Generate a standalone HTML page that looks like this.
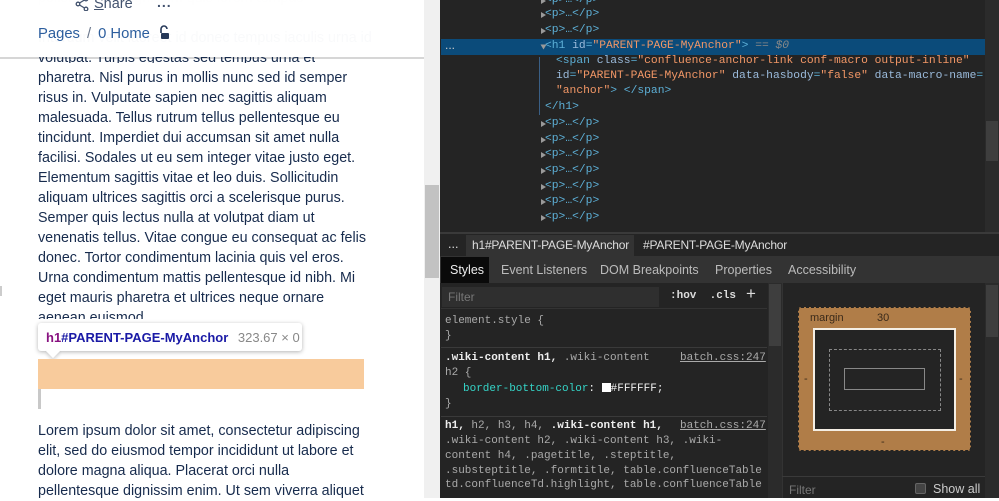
<!DOCTYPE html>
<html><head><meta charset="utf-8"><style>
*{margin:0;padding:0;box-sizing:border-box}
body{width:999px;height:498px;overflow:hidden;position:relative;background:#fff;font-family:"Liberation Sans",sans-serif}
.a{position:absolute;white-space:nowrap}
.lt{left:38px;font-size:14.3px;color:#172b4d;line-height:20px}
.m{font-family:"Liberation Mono",monospace;font-size:11px}
.d{font-family:"Liberation Mono",monospace;font-size:11.3px}
.dom{left:545px;color:#5db0d7}
.tri{position:absolute;left:-4px;top:4px;width:0;height:0;border-left:5px solid #9a9a9a;border-top:3.5px solid transparent;border-bottom:3.5px solid transparent}
.at{color:#9bbbdc}.av{color:#f29766}.tg{color:#5db0d7}
.sel{color:#aaa}
</style></head><body>
<div class="a lt" style="top:-12px;color:#c9ced6">pellentesque dignissim quis lorem tempus</div>
<div class="a lt" style="top:9px;color:#e4e7ec">elementum nibh quis eleifend quam adipiscing vitae</div>
<div class="a" style="left:0;top:0;width:424px;height:58px;background:rgba(255,255,255,.9)"></div>
<div class="a lt" style="top:28px;color:#eceef2">Interdum velit laoreet id donec tempus iaculis urna id</div>
<div class="a" style="left:0;top:0;width:424px;height:58px;background:rgba(255,255,255,.7)"></div>
<svg class="a" style="left:75px;top:-3px" width="14" height="14" viewBox="0 0 14 14"><circle cx="11" cy="2" r="1.8" fill="none" stroke="#42526e" stroke-width="1.3"/><circle cx="3" cy="7" r="1.8" fill="none" stroke="#42526e" stroke-width="1.3"/><circle cx="11" cy="12" r="1.8" fill="none" stroke="#42526e" stroke-width="1.3"/><path d="M4.5 6 9.5 3M4.5 8 9.5 11" stroke="#42526e" stroke-width="1.3"/></svg>
<div class="a" style="left:94px;top:-4px;font-size:14.5px;color:#42526e"><u>S</u>hare</div>
<div class="a" style="left:157px;top:-6px;font-size:14px;color:#42526e;font-weight:bold;letter-spacing:1px">...</div>
<div class="a" style="left:38px;top:26px;font-size:14.8px"><span style="color:#2c5e9e">Pages</span><span style="color:#6b778c;margin:0 7px">/</span><span style="color:#2c5e9e">0 Home</span></div>
<svg class="a" style="left:158px;top:25px" width="12" height="15" viewBox="0 0 12 15"><path d="M3 8V4a3 3 0 0 1 6 0" fill="none" stroke="#253858" stroke-width="1.6"/><rect x="3" y="8" width="8" height="6" rx="1" fill="#253858"/></svg>
<div class="a" style="left:0;top:57px;width:424px;height:2px;background:#d6d6d6"></div>
<div class="a lt" style="top:57px;height:6px;overflow:hidden;line-height:2px;color:#172b4d">volutpat. Turpis egestas sed tempus urna et</div>
<div class="a lt" style="top:68px">pharetra. Nisl purus in mollis nunc sed id semper</div>
<div class="a lt" style="top:88px">risus in. Vulputate sapien nec sagittis aliquam</div>
<div class="a lt" style="top:108px">malesuada. Tellus rutrum tellus pellentesque eu</div>
<div class="a lt" style="top:128px">tincidunt. Imperdiet dui accumsan sit amet nulla</div>
<div class="a lt" style="top:148px">facilisi. Sodales ut eu sem integer vitae justo eget.</div>
<div class="a lt" style="top:168px">Elementum sagittis vitae et leo duis. Sollicitudin</div>
<div class="a lt" style="top:188px">aliquam ultrices sagittis orci a scelerisque purus.</div>
<div class="a lt" style="top:208px">Semper quis lectus nulla at volutpat diam ut</div>
<div class="a lt" style="top:228px">venenatis tellus. Vitae congue eu consequat ac felis</div>
<div class="a lt" style="top:248px">donec. Tortor condimentum lacinia quis vel eros.</div>
<div class="a lt" style="top:268px">Urna condimentum mattis pellentesque id nibh. Mi</div>
<div class="a lt" style="top:288px">eget mauris pharetra et ultrices neque ornare</div>
<div class="a lt" style="top:308px;height:11px;overflow:hidden">aenean euismod</div>
<div class="a" style="left:0;top:286px;width:2px;height:10px;background:#ccc"></div>
<div class="a" style="left:38px;top:323px;width:264px;height:28px;background:#fff;box-shadow:0 1px 4px rgba(0,0,0,.3);border-radius:3px"></div>
<div class="a" style="left:48px;top:346px;width:10px;height:10px;background:#fff;transform:rotate(45deg);box-shadow:2px 2px 3px rgba(0,0,0,.15)"></div>
<div class="a" style="left:46px;top:330px;font-size:13px;font-weight:bold;color:#1a1aa6"><span style="color:#881280">h1</span>#PARENT-PAGE-MyAnchor <span style="font-weight:normal;color:#888;margin-left:6px">323.67 × 0</span></div>
<div class="a" style="left:38px;top:359px;width:326px;height:30px;background:#f8cb9c"></div>
<div class="a" style="left:38px;top:389px;width:3px;height:20px;background:#c8c8c8"></div>
<div class="a lt" style="top:421px">Lorem ipsum dolor sit amet, consectetur adipiscing</div>
<div class="a lt" style="top:441px">elit, sed do eiusmod tempor incididunt ut labore et</div>
<div class="a lt" style="top:461px">dolore magna aliqua. Placerat orci nulla</div>
<div class="a lt" style="top:481px">pellentesque dignissim enim. Ut sem viverra aliquet</div>
<div class="a" style="left:424px;top:0;width:16px;height:498px;background:#f0f0f0"></div>
<div class="a" style="left:425px;top:185px;width:14px;height:93px;background:#c2c2c2"></div>
<div class="a" style="left:440px;top:0;width:559px;height:234px;background:#242424"></div>
<div class="a" style="left:441px;top:39px;width:544px;height:16px;background:#0b4b7a"></div>
<div class="a" style="left:445px;top:38px;color:#ccc;font-size:12px">...</div>
<div class="a" style="left:985px;top:0;width:14px;height:234px;background:#2b2b2b"></div>
<div class="a" style="left:986px;top:121px;width:12px;height:40px;background:#3e3e3e"></div>
<div class="a" style="left:539px;top:57px;width:1px;height:58px;background:#3a5f85"></div>
<div class="a d dom" style="top:-6px"><i class="tri"></i>&lt;p&gt;…&lt;/p&gt;</div>
<div class="a d dom" style="top:8px"><i class="tri"></i>&lt;p&gt;…&lt;/p&gt;</div>
<div class="a d dom" style="top:24px"><i class="tri"></i>&lt;p&gt;…&lt;/p&gt;</div>
<div class="a d dom" style="top:40px"><i class="tri" style="transform:rotate(90deg)"></i>&lt;h1 <span class="at">id</span>=<span class="av">"PARENT-PAGE-MyAnchor"</span>&gt; <span style="color:#888;font-style:italic">== $0</span></div>
<div class="a d" style="left:556px;top:55px;color:#5db0d7">&lt;span <span class="at">class</span>=<span class="av">"confluence-anchor-link conf-macro output-inline"</span></div>
<div class="a d" style="left:556px;top:70px;color:#5db0d7"><span class="at">id</span>=<span class="av">"PARENT-PAGE-MyAnchor"</span> <span class="at">data-hasbody</span>=<span class="av">"false"</span> <span class="at">data-macro-name</span>=</div>
<div class="a d" style="left:556px;top:85px"><span class="av">"anchor"</span><span class="tg">&gt; &lt;/span&gt;</span></div>
<div class="a d dom" style="top:101px;left:545px">&lt;/h1&gt;</div>
<div class="a d dom" style="top:117px"><i class="tri"></i>&lt;p&gt;…&lt;/p&gt;</div>
<div class="a d dom" style="top:133px"><i class="tri"></i>&lt;p&gt;…&lt;/p&gt;</div>
<div class="a d dom" style="top:148px"><i class="tri"></i>&lt;p&gt;…&lt;/p&gt;</div>
<div class="a d dom" style="top:164px"><i class="tri"></i>&lt;p&gt;…&lt;/p&gt;</div>
<div class="a d dom" style="top:180px"><i class="tri"></i>&lt;p&gt;…&lt;/p&gt;</div>
<div class="a d dom" style="top:195px"><i class="tri"></i>&lt;p&gt;…&lt;/p&gt;</div>
<div class="a d dom" style="top:211px"><i class="tri"></i>&lt;p&gt;…&lt;/p&gt;</div>
<div class="a" style="left:440px;top:232px;width:559px;height:2px;background:#3a3a3a"></div>
<div class="a" style="left:440px;top:234px;width:559px;height:22px;background:#242424"></div>
<div class="a" style="left:466px;top:235px;width:168px;height:21px;background:#333"></div>
<div class="a" style="left:448px;top:237px;color:#ddd;font-size:12.5px">...</div>
<div class="a" style="left:472px;top:238px;color:#ddd;font-size:12px;letter-spacing:-0.2px">h1#PARENT-PAGE-MyAnchor</div>
<div class="a" style="left:643px;top:238px;color:#ddd;font-size:12px;letter-spacing:-0.2px">#PARENT-PAGE-MyAnchor</div>
<div class="a" style="left:440px;top:256px;width:559px;height:27px;background:#333"></div>
<div class="a" style="left:441px;top:257px;width:48px;height:26px;background:#0a0a0a"></div>
<div class="a" style="left:450px;top:263px;color:#eee;font-size:12.5px">Styles</div>
<div class="a" style="left:501px;top:263px;color:#bbb;font-size:12.5px">Event Listeners</div>
<div class="a" style="left:600px;top:263px;color:#bbb;font-size:12.5px">DOM Breakpoints</div>
<div class="a" style="left:715px;top:263px;color:#bbb;font-size:12.5px">Properties</div>
<div class="a" style="left:788px;top:263px;color:#bbb;font-size:12.5px">Accessibility</div>
<div class="a" style="left:440px;top:283px;width:342px;height:215px;background:#242424"></div>
<div class="a" style="left:442px;top:287px;width:217px;height:20px;background:#2f2f2f"></div>
<div class="a" style="left:448px;top:290px;color:#777;font-size:12px">Filter</div>
<div class="a m" style="left:670px;top:290px;color:#ddd;font-weight:bold">:hov&nbsp; .cls</div>
<div class="a" style="left:746px;top:284px;color:#ddd;font-size:17px">+</div>
<div class="a" style="left:441px;top:308px;width:326px;height:1px;background:#333"></div>
<div class="a m" style="left:445px;top:315px;color:#aaa">element.style {</div>
<div class="a m" style="left:445px;top:330px;color:#aaa">}</div>
<div class="a" style="left:441px;top:347px;width:326px;height:1px;background:#3a3a3a"></div>
<div class="a m" style="left:445px;top:352px;color:#eee"><b>.wiki-content h1,</b> <span class="sel">.wiki-content</span></div>
<div class="a m" style="left:680px;top:352px;color:#aaa;text-decoration:underline">batch.css:247</div>
<div class="a m" style="left:445px;top:367px;color:#aaa">h2 {</div>
<div class="a m" style="left:463px;top:383px;color:#35d4c7">border-bottom-color<span style="color:#eee">: <span style="display:inline-block;width:9px;height:9px;background:#fff;vertical-align:-1px"></span>#FFFFFF;</span></div>
<div class="a m" style="left:445px;top:398px;color:#aaa">}</div>
<div class="a" style="left:441px;top:416px;width:326px;height:1px;background:#3a3a3a"></div>
<div class="a m" style="left:445px;top:420px;color:#eee"><b>h1,</b> <span class="sel">h2, h3, h4,</span> <b>.wiki-content h1,</b></div>
<div class="a m" style="left:680px;top:420px;color:#aaa;text-decoration:underline">batch.css:247</div>
<div class="a m" style="left:445px;top:435px;color:#aaa">.wiki-content h2, .wiki-content h3, .wiki-</div>
<div class="a m" style="left:445px;top:450px;color:#aaa">content h4, .pagetitle, .steptitle,</div>
<div class="a m" style="left:445px;top:465px;color:#aaa">.substeptitle, .formtitle, table.confluenceTable</div>
<div class="a m" style="left:445px;top:479px;color:#aaa">td.confluenceTd.highlight, table.confluenceTable</div>
<div class="a" style="left:768px;top:283px;width:14px;height:215px;background:#2b2b2b"></div>
<div class="a" style="left:769px;top:284px;width:12px;height:62px;background:#3e3e3e"></div>
<div class="a" style="left:782px;top:283px;width:203px;height:215px;background:#242424;border-left:1px solid #333"></div>
<div class="a" style="left:798px;top:307px;width:173px;height:144px;background:#b07d48;border:1px dashed #222;border-radius:3px"></div>
<div class="a" style="left:810px;top:312px;color:#3a2a1a;font-size:11px">margin</div>
<div class="a" style="left:877px;top:312px;color:#3a2a1a;font-size:11px">30</div>
<div class="a" style="left:804px;top:373px;color:#3a2a1a;font-size:11px">-</div>
<div class="a" style="left:959px;top:373px;color:#3a2a1a;font-size:11px">-</div>
<div class="a" style="left:881px;top:436px;color:#3a2a1a;font-size:11px">-</div>
<div class="a" style="left:813px;top:328px;width:143px;height:103px;background:#242424;border:2px solid #f4eee4"></div>
<div class="a" style="left:829px;top:349px;width:112px;height:62px;border:1.5px dashed #888"></div>
<div class="a" style="left:844px;top:368px;width:81px;height:22px;border:1.5px solid #888"></div>
<div class="a" style="left:782px;top:476px;width:203px;height:1px;background:#3a3a3a"></div>
<div class="a" style="left:789px;top:483px;color:#777;font-size:12px">Filter</div>
<div class="a" style="left:915px;top:483px;width:11px;height:11px;background:#444;border:1px solid #666;border-radius:2px"></div>
<div class="a" style="left:933px;top:482px;color:#ccc;font-size:12.5px">Show all</div>
<div class="a" style="left:985px;top:283px;width:14px;height:215px;background:#2b2b2b"></div>
<div class="a" style="left:986px;top:285px;width:12px;height:52px;background:#3e3e3e"></div>
</body></html>
